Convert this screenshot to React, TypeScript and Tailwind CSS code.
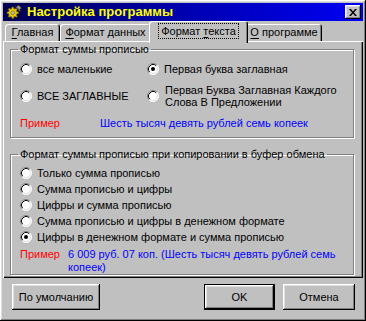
import React from 'react';

const bevelOut =
  'shadow-[inset_-1px_-1px_0_#000,inset_1px_1px_0_#fff,inset_-2px_-2px_0_#808080,inset_2px_2px_0_#dfdfdf]';

function Radio({ checked = false }: { checked?: boolean }) {
  return (
    <svg width="12" height="12" viewBox="0 0 12 12" className="shrink-0">
      <circle cx="6" cy="6" r="5.5" fill="#fff" />
      <path d="M2.11 9.89 A5.5 5.5 0 0 1 9.89 2.11" fill="none" stroke="#808080" strokeWidth="1" />
      <path d="M9.89 2.11 A5.5 5.5 0 0 1 2.11 9.89" fill="none" stroke="#fff" strokeWidth="1" />
      <path d="M2.82 9.18 A4.5 4.5 0 0 1 9.18 2.82" fill="none" stroke="#000" strokeWidth="1" />
      <path d="M9.18 2.82 A4.5 4.5 0 0 1 2.82 9.18" fill="none" stroke="#dfdfdf" strokeWidth="1" />
      {checked && <circle cx="6" cy="6" r="2" fill="#000" />}
    </svg>
  );
}

function Option({ label, checked }: { label: React.ReactNode; checked?: boolean }) {
  return (
    <div className="flex items-center gap-[5px] h-[16px]">
      <Radio checked={checked} />
      <span>{label}</span>
    </div>
  );
}

function Tab({
  pre = '',
  u,
  post,
  width,
  selected = false,
}: {
  pre?: string;
  u: string;
  post: string;
  width: string;
  selected?: boolean;
}) {
  const label = (
    <span className={selected ? 'px-[2px] outline-1 outline-dotted outline-black leading-[14px]' : ''}>
      {pre}
      <span className="underline underline-offset-[2px]">{u}</span>
      {post}
    </span>
  );
  if (selected) {
    return (
      <div
        className={`relative z-10 -mb-[2px] -mx-[2px] h-[22px] ${width} flex items-start justify-center pt-[3px] bg-[#c0c0c0] rounded-t-[3px] shadow-[inset_1px_1px_0_#fff,inset_-1px_0_0_#000,inset_-2px_0_0_#808080]`}
      >
        {label}
      </div>
    );
  }
  return (
    <div
      className={`h-[17px] ${width} flex items-center justify-center rounded-t-[3px] shadow-[inset_1px_1px_0_#fff,inset_-1px_0_0_#000,inset_-2px_0_0_#808080]`}
    >
      {label}
    </div>
  );
}

function AppIcon() {
  return (
    <svg width="16" height="16" viewBox="0 0 16 16" className="shrink-0">
      <g fill="#e8c800" stroke="#6b5a00" strokeWidth="0.6">
        <path d="M6 3 L7.5 3 L7.8 4.6 L9 5.1 L10.3 4.2 L11.3 5.2 L10.4 6.5 L10.9 7.7 L12.5 8 L12.5 9.5 L10.9 9.8 L10.4 11 L11.3 12.3 L10.3 13.3 L9 12.4 L7.8 12.9 L7.5 14.5 L6 14.5 L5.7 12.9 L4.5 12.4 L3.2 13.3 L2.2 12.3 L3.1 11 L2.6 9.8 L1 9.5 L1 8 L2.6 7.7 L3.1 6.5 L2.2 5.2 L3.2 4.2 L4.5 5.1 L5.7 4.6 Z" />
      </g>
      <circle cx="6.75" cy="8.75" r="1.8" fill="#c0c0c0" stroke="#6b5a00" strokeWidth="0.6" />
      <path d="M10 2 L15 7 L14 8 L9 3 Z" fill="#808080" stroke="#000" strokeWidth="0.5" />
      <path d="M12.5 1 L15.5 4 L13.5 6 L10.5 3 Z" fill="#a0a0a0" stroke="#000" strokeWidth="0.5" />
    </svg>
  );
}

function Button({ children, width, isDefault = false }: { children: React.ReactNode; width: string; isDefault?: boolean }) {
  return (
    <div className={`${width} h-[26px] ${isDefault ? 'border border-black' : ''}`}>
      <div className={`w-full h-full flex items-center justify-center ${bevelOut}`}>{children}</div>
    </div>
  );
}

export default function App() {
  return (
    <div
      className={`w-[366px] h-[321px] bg-[#c0c0c0] p-[3px] flex flex-col text-[11px] leading-[13px] text-black font-['Liberation_Sans',Arial,sans-serif] ${bevelOut}`}
    >
      {/* Title bar */}
      <div className="h-[18px] flex items-center pl-[3px] pr-[2px] bg-gradient-to-r from-[#000050] via-[#0000b0] to-[#0000f4]">
        <AppIcon />
        <span className="ml-[5px] text-[13px] font-bold text-[#ffff00] leading-[16px]">Настройка программы</span>
        <div className="ml-auto">
          <div className={`w-[16px] h-[14px] bg-[#c0c0c0] flex items-center justify-center ${bevelOut}`}>
            <svg width="8" height="7" viewBox="0 0 8 7">
              <path d="M0 0h2l2 2.5L6 0h2L5 3.5 8 7H6L4 4.5 2 7H0l3-3.5z" fill="#000" />
            </svg>
          </div>
        </div>
      </div>

      {/* Tabs */}
      <div className="h-[20px] flex items-end pl-[2px]">
        <Tab u="Г" post="лавная" width="w-[55px]" />
        <Tab u="Ф" post="ормат данных" width="w-[91px]" />
        <Tab pre="Формат " u="т" post="екста" width="w-[99px]" selected />
        <Tab u="О" post=" программе" width="w-[76px]" />
      </div>

      {/* Panel */}
      <div className="h-[237px] flex flex-col pl-[7px] pr-[9px] pt-[2px] shadow-[inset_1px_1px_0_#fff,inset_-1px_-1px_0_#000,inset_-2px_-2px_0_#808080]">
        <fieldset className="border border-[#808080] shadow-[1px_1px_0_#fff,inset_1px_1px_0_#fff] pl-[9px] pb-[7px]">
          <legend className="-ml-[2px] px-[2px]">Формат суммы прописью</legend>
          <div className="grid grid-cols-[127px_1fr] mt-[5px]">
            <Option label="все маленькие" />
            <Option label="Первая буква заглавная" checked />
            <div className="flex items-center mt-[6px] h-[26px]">
              <Option label="ВСЕ ЗАГЛАВНЫЕ" />
            </div>
            <div className="flex items-center gap-[6px] mt-[6px] h-[26px]">
              <Radio />
              <span className="leading-[12px]">
                Первая Буква Заглавная Каждого
                <br />
                Слова В Предложении
              </span>
            </div>
          </div>
          <div className="flex mt-[8px]">
            <span className="w-[80px] text-[#ff0000]">Пример</span>
            <span className="text-[#0000ff]">Шесть тысяч девять рублей семь копеек</span>
          </div>
        </fieldset>

        <fieldset className="mt-[10px] border border-[#808080] shadow-[1px_1px_0_#fff,inset_1px_1px_0_#fff] pl-[9px] pb-0">
          <legend className="-ml-[2px] px-[2px]">Формат суммы прописью при копировании в буфер обмена</legend>
          <div className="flex flex-col mt-[4px]">
            <Option label="Только сумма прописью" />
            <Option label="Сумма прописью и цифры" />
            <Option label="Цифры и сумма прописью" />
            <Option label="Сумма прописью и цифры в денежном формате" />
            <Option label="Цифры в денежном формате и сумма прописью" checked />
          </div>
          <div className="flex mt-[3px]">
            <span className="w-[48px] shrink-0 text-[#ff0000]">Пример</span>
            <span className="text-[#0000ff]">
              6 009 руб. 07 коп. (Шесть тысяч девять рублей семь
              <br />
              копеек)
            </span>
          </div>
        </fieldset>
      </div>

      {/* Buttons */}
      <div className="flex items-center mt-[6px] pl-[9px] pr-[8px]">
        <Button width="w-[88px]">По умолчанию</Button>
        <div className="ml-auto flex gap-[8px]">
          <Button width="w-[71px]" isDefault>
            OK
          </Button>
          <Button width="w-[72px]">Отмена</Button>
        </div>
      </div>
    </div>
  );
}
